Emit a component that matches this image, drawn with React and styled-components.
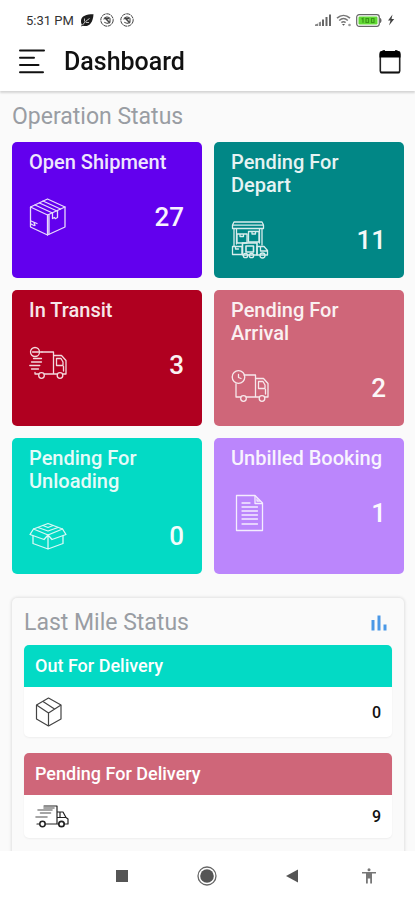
import React from 'react'
import styled, { createGlobalStyle } from 'styled-components'

const GlobalStyle = createGlobalStyle`
    * {
        box-sizing: border-box;
    }

    body {
        margin: 0;
        background: #fff;
        font-family: Roboto, "Liberation Sans", sans-serif;
    }
`

/* ---------- Icons ---------- */

const LeafIcon = () => (
    <svg width="14" height="13" viewBox="0 0 14 13" aria-hidden="true">
        <path d="M13.500 0.300C7 0.200 0.800 1.800 1 7.200c0 1.500.3 2.400.9 3.200L1 12.600l1.800-.9C8.500 13.500 13 9.500 13.500 0.300z" fill="#1c1c1c" />
        <path d="M2.500 11C4.500 8.500 6.500 6.500 9.500 4.500" stroke="#fff" strokeWidth="0.800" fill="none" />
        <path d="M4.500 4.500v3M6 8.500h3" stroke="#fff" strokeWidth="0.700" fill="none" />
    </svg>
)

const SyncIcon = () => (
    <svg width="14" height="14" viewBox="0 0 14 14" fill="none" stroke="#444" aria-hidden="true">
        <circle cx="7" cy="7" r="6.200" strokeDasharray="4 0.600" strokeWidth="1" />
        <path d="M3.800 6.500C4.300 3.800 8.300 3 10 5.500v3C9.500 10.500 6 11 4.300 9" strokeWidth="1.100" />
        <path d="M5 5.500h4M6 6l4 4" strokeWidth="1.500" />
    </svg>
)

const SignalIcon = () => (
    <svg width="17" height="12" viewBox="0 0 17 12" aria-hidden="true">
        <path d="M0 12V10.500L3 9.500V12zM3.800 12V8.500L6 7.500V12z" fill="#888" />
        <path d="M7 5.500h2V12H7zM10.500 3h2v9h-2zM14 0.500h2V12h-2z" fill="#666" />
    </svg>
)

const WifiIcon = () => (
    <svg width="16" height="13" viewBox="0 0 16 13" fill="none" stroke="#777" strokeWidth="1.600" aria-hidden="true">
        <path d="M1 4.200C5 0.500 10 0.500 14 4.200M3.200 6.500c2.600-2.400 6-2.400 8.600 0M5.400 8.700c1.300-1.200 2.900-1.200 4.200 0" />
        <path d="M6 10h3L7.500 11.800z" fill="#555" stroke="none" />
        <circle cx="13.500" cy="11" r="1.300" fill="#999" stroke="none" />
    </svg>
)

const BatteryIcon = () => (
    <svg width="27" height="13" viewBox="0 0 27 13" aria-hidden="true">
        <rect x="0.700" y="0.700" width="22.600" height="11.600" rx="2.500" fill="#fff" stroke="#666" strokeWidth="1.200" />
        <path d="M24 4c2 .5 2 4.500 0 5z" fill="#666" />
        <rect x="2.500" y="2.500" width="19" height="8" rx="1.200" fill="#62d934" />
        <path d="M5.500 5l1.500-.8v4.600M10 4.500h2.500v4H10zM15.500 4.500H18v4h-2.500z" fill="none" stroke="#399717" strokeWidth="1.200" />
    </svg>
)

const BoltIcon = () => (
    <svg width="8" height="12" viewBox="0 0 8 12" aria-hidden="true">
        <path d="M5.500 0.500L1 6.500h2.500L2 11.500 7.200 5H4.500z" fill="#444" />
    </svg>
)

const MenuIcon = () => (
    <svg width="28" height="26" viewBox="0 0 28 26" stroke="#111" strokeWidth="2" strokeLinecap="round" aria-hidden="true">
        <path d="M2 1.500H26M2 8.800H16M2 16H20.500M2 23.200H25" />
    </svg>
)

const CalendarIcon = () => (
    <svg width="22" height="24" viewBox="0 0 22 24" aria-hidden="true">
        <path d="M3.500 0h2.500V3H3.500zM16 0h2.500V3H16z" fill="#333" />
        <rect x="1.300" y="3" width="19.400" height="19.500" rx="1.500" fill="none" stroke="#222" strokeWidth="1.600" />
        <path d="M1.500 22.500h19" stroke="#111" strokeWidth="1.800" />
        <path d="M0.500 3a2 2 0 0 1 2-2h17a2 2 0 0 1 2 2v4.500h-21z" fill="#000" />
    </svg>
)

const ChartIcon = () => (
    <svg width="18" height="16" viewBox="0 0 18 16" fill="#4a98e6" aria-hidden="true">
        <path d="M1.500 5h3v10.500h-3zM7.500 0.500h3v15h-3zM13.500 9.500h3v6h-3z" />
    </svg>
)

// Shared frame of the tile icons
const TileSvg = ({ children }) => (
    <svg
        width="38"
        height="38"
        viewBox="0 0 38 38"
        fill="none"
        stroke="currentColor"
        strokeWidth="1.300"
        strokeLinejoin="round"
        strokeLinecap="round"
        opacity="0.85"
        aria-hidden="true"
    >
        {children}
    </svg>
)

const PackageIcon = () => (
    <TileSvg>
        <path d="M18.500 1L36 9v20L18.500 37 1.500 29V9z" />
        <path d="M1.500 9l17 8L36 9M18.500 17v20M20 17v19" />
        <path d="M6 7l17.500 8M10.500 5L28 13M14 3l17.500 8" />
        <path d="M23.500 15v5.500l2-1 .8 1.200 2.200-1.200V12.500" />
        <path d="M2 23l6 2.500M2 26l3 1.500M5 24.500l1 3" />
    </TileSvg>
)

const WarehouseIcon = () => (
    <TileSvg>
        <path d="M3 1h28l1.500 3v3.500H1.500V4zM1.500 4.200h31M3 7.500V25M5.500 7.500V23M31 7.500V24M28.500 7.500V22" />
        <path d="M6 13h10v9H6zM9 13v2.500h3.500V13M17.500 10.500H28V21H17.500zM21 10.500V13h3.500v-2.500" />
        <path d="M1.500 25.500h9.500v8H1.500zM4.500 25.500v2.500h3" />
        <path d="M11.500 22H26v12H11.500zM15 25h7.500v6H15z" strokeWidth="1.600" />
        <path d="M26 25.500h7l3.500 4V34H26zM29.500 26v4h6.500" />
        <circle cx="14.500" cy="34.500" r="2.200" />
        <circle cx="20.500" cy="34.500" r="2.200" />
        <circle cx="31.500" cy="34.500" r="2.500" />
    </TileSvg>
)

// Body and wheels that both truck tiles have in common
const TruckShape = () => (
    <>
        <path d="M13 6h11.500v19M25 9.500h7.500L37 14.500V28h-3M28 28H24.500V9.500M15.500 28h12.500" />
        <path d="M27.500 12.500h4.500l2 3.500v3.500h-6.500zM34.500 20.500V25" />
        <circle cx="12.500" cy="29.500" r="2.800" />
        <circle cx="31" cy="29.500" r="2.800" />
    </>
)

const TransitIcon = () => (
    <TileSvg>
        <TruckShape />
        <circle cx="6" cy="6" r="4.500" />
        <path d="M3.500 6h9.500M4.500 12.500h8M2.500 16h10M.8 19.500h10M2.500 23h7M6 26.500V28h3.500" />
    </TileSvg>
)

const ArrivalIcon = () => (
    <TileSvg>
        <TruckShape />
        <circle cx="7.500" cy="8" r="6.300" />
        <path d="M7.500 5.500v3l2.500 1M5 28h4.500M5 28V15" />
    </TileSvg>
)

const OpenBoxIcon = () => (
    <TileSvg>
        <path d="M4.500 12L19 6.500 33.500 12 19 18z" />
        <path d="M4.500 12L1 17.500l14 5L19 18l4 4.500 14-5L33.500 12" />
        <path d="M9 10.500l10 3.500 10-3.500M14 8.500L19 10.500l5-2" />
        <path d="M4 19v7.500L19 32l15-5.500V19M19 18v14" />
    </TileSvg>
)

const DocumentIcon = () => (
    <TileSvg>
        <path d="M5.500 1.500H24l7.500 7.500v27.500h-26z" />
        <path d="M24 2v7.500h7M26 5v2h2.500" />
        <path d="M11 9h8M11 13h15.500M11 17h15.500M11 21h15.500M11 25h15.500M11 30h15.500" />
    </TileSvg>
)

const CubeIcon = () => (
    <svg width="28" height="30" viewBox="0 0 28 30" fill="none" stroke="#444" strokeWidth="1.200" strokeLinejoin="round" aria-hidden="true">
        <path d="M13.500 1L26 8v14L13.500 29 1.500 22V8z" />
        <path d="M1.500 8l12 8L26 8M13.500 16v13M8 4.500l11.500 7.500" />
    </svg>
)

const FastTruckIcon = () => (
    <svg width="34" height="23" viewBox="0 0 34 23" fill="none" stroke="#222" strokeWidth="1.200" strokeLinecap="round" strokeLinejoin="round" aria-hidden="true">
        <path d="M9 1h13v18M10 19h12.500M2 19h2.500M22 7h6l3 5.500 2 1.500v5h-2.500M22.500 12.500H31M25 7.500v4.500" />
        <path d="M9 3h10M3 5h14M5.500 8h10M1 12h11" stroke="#888" strokeWidth="1.600" />
        <circle cx="7.500" cy="19" r="2.700" strokeWidth="1.500" />
        <circle cx="26.500" cy="19" r="2.700" strokeWidth="1.700" />
    </svg>
)

const RecentIcon = () => (
    <svg width="14" height="14" viewBox="0 0 14 14" aria-hidden="true">
        <path d="M1 1h12v12H1z" fill="#555" />
    </svg>
)

const HomeIcon = () => (
    <svg width="20" height="20" viewBox="0 0 20 20" aria-hidden="true">
        <circle cx="10" cy="10" r="9" fill="#fff" stroke="#666" strokeWidth="1.300" />
        <circle cx="10" cy="10" r="6.800" fill="#555" />
    </svg>
)

const BackIcon = () => (
    <svg width="14" height="14" viewBox="0 0 14 14" aria-hidden="true">
        <path d="M13 0.500v13L1 7z" fill="#555" />
    </svg>
)

const PersonIcon = () => (
    <svg width="16" height="16" viewBox="0 0 16 16" fill="#777" aria-hidden="true">
        <circle cx="8" cy="1.700" r="1.500" />
        <path d="M1 4h14v1.500h-4V15.500H9.200V10.500H6.800v5H5V5.500H1z" />
    </svg>
)

/* ---------- Data ---------- */

const operations = [
    { title: 'Open Shipment', value: 27, color: '#6200ee', Icon: PackageIcon },
    { title: 'Pending For Depart', value: 11, color: '#018786', Icon: WarehouseIcon },
    { title: 'In Transit', value: 3, color: '#b00020', Icon: TransitIcon },
    { title: 'Pending For Arrival', value: 2, color: '#cf6679', Icon: ArrivalIcon },
    { title: 'Pending For Unloading', value: 0, color: '#03dac5', Icon: OpenBoxIcon },
    { title: 'Unbilled Booking', value: 1, color: '#bb86fc', Icon: DocumentIcon },
]

const deliveries = [
    { title: 'Out For Delivery', value: 0, color: '#03dac5', Icon: CubeIcon },
    { title: 'Pending For Delivery', value: 9, color: '#cf6679', Icon: FastTruckIcon },
]

function App() {
    return (
        <Screen>
            <GlobalStyle />
            <StatusBar>
                <StatusGroup $gap={6}>
                    <span>5:31 PM</span>
                    <LeafIcon />
                    <SyncIcon />
                    <SyncIcon />
                </StatusGroup>
                <StatusGroup $gap={4}>
                    <SignalIcon />
                    <WifiIcon />
                    <BatteryIcon />
                    <BoltIcon />
                </StatusGroup>
            </StatusBar>
            <AppBar>
                <IconButton aria-label="Menu"><MenuIcon /></IconButton>
                <PageTitle>Dashboard</PageTitle>
                <IconButton aria-label="Calendar"><CalendarIcon /></IconButton>
            </AppBar>
            <Content>
                <SectionTitle>Operation Status</SectionTitle>
                <Tiles>
                    {operations.map(({ title, value, color, Icon }) => (
                        <Tile key={title} $color={color}>
                            <TileTitle>{title}</TileTitle>
                            <TileRow>
                                <Icon />
                                <TileValue>{value}</TileValue>
                            </TileRow>
                        </Tile>
                    ))}
                </Tiles>
                <Panel>
                    <PanelHeader>
                        <SectionTitle>Last Mile Status</SectionTitle>
                        <IconButton aria-label="Chart"><ChartIcon /></IconButton>
                    </PanelHeader>
                    {deliveries.map(({ title, value, color, Icon }) => (
                        <Delivery key={title}>
                            <DeliveryTitle $color={color}>{title}</DeliveryTitle>
                            <DeliveryRow>
                                <Icon />
                                <span>{value}</span>
                            </DeliveryRow>
                        </Delivery>
                    ))}
                </Panel>
            </Content>
            <NavBar>
                <IconButton aria-label="Recent apps"><RecentIcon /></IconButton>
                <IconButton aria-label="Home"><HomeIcon /></IconButton>
                <IconButton aria-label="Back"><BackIcon /></IconButton>
                <IconButton aria-label="Accessibility"><PersonIcon /></IconButton>
            </NavBar>
        </Screen>
    )
}

export default App

/* ---------- Styles ---------- */

const Screen = styled.div`
    display: flex;
    flex-direction: column;
    height: 100vh;
    background: #fff;
`

const StatusBar = styled.div`
    display: flex;
    justify-content: space-between;
    padding: 12px 20px 4px 26px;
`

const StatusGroup = styled.div`
    display: flex;
    align-items: center;
    gap: ${({ $gap }) => $gap}px;
    height: 16px;
    color: #333;
    font-size: 13px;
`

const AppBar = styled.header`
    display: flex;
    align-items: center;
    gap: 18px;
    height: 59px;
    padding: 0 14px 0 18px;
    box-shadow: 0 2px 2px rgba(0, 0, 0, 0.15);
    z-index: 1;
`

const IconButton = styled.button`
    display: flex;
    align-items: center;
    justify-content: center;
    padding: 0;
    border: 0;
    background: none;
    cursor: pointer;
`

const PageTitle = styled.h1`
    flex: 1;
    margin: 0;
    color: #111;
    font-size: 25px;
    font-weight: 500;
    line-height: 28px;
`

const Content = styled.main`
    flex: 1;
    min-height: 0;
    padding: 12px 11px 12px 12px;
    background: #fafafa;
    overflow-y: auto;
    scrollbar-width: none;
`

const SectionTitle = styled.h2`
    margin: 0;
    color: #999da3;
    font-size: 23px;
    font-weight: 400;
    line-height: 28px;
`

const Tiles = styled.div`
    display: grid;
    grid-template-columns: 1fr 1fr;
    grid-auto-rows: 136px;
    gap: 12px;
    margin-top: 11px;
`

const Tile = styled.article`
    padding: 9px 18px 9px 17px;
    border-radius: 5px;
    background: ${({ $color }) => $color};
    color: #fff;
`

const TileTitle = styled.h3`
    margin: 0;
    font-size: 20px;
    font-weight: 500;
    line-height: 23px;
    opacity: 0.9;
`

const TileRow = styled.div`
    display: flex;
    align-items: center;
    justify-content: space-between;
    margin-top: 24px;
`

const TileValue = styled.span`
    font-size: 26px;
    font-weight: 500;
    opacity: 0.95;
`

const Panel = styled.section`
    margin-top: 24px;
    padding: 11px 12px;
    border-radius: 5px;
    box-shadow: 0 0 3px 1px rgba(0, 0, 0, 0.1);
`

const PanelHeader = styled.div`
    display: flex;
    align-items: center;
    justify-content: space-between;
    margin-bottom: 8px;
    padding-right: 4px;
`

const Delivery = styled.article`
    margin-bottom: 16px;
    border-radius: 5px;
    background: #fff;
    box-shadow: 0 1px 2px rgba(0, 0, 0, 0.05);
    overflow: hidden;
`

const DeliveryTitle = styled.h3`
    margin: 0;
    padding: 0 11px;
    background: ${({ $color }) => $color};
    color: #fff;
    font-size: 18px;
    font-weight: 500;
    line-height: 42px;
`

const DeliveryRow = styled.div`
    display: flex;
    align-items: center;
    justify-content: space-between;
    padding: 10px 11px;
    color: #111;
    font-size: 16px;
    font-weight: 500;
`

const NavBar = styled.nav`
    display: grid;
    grid-template-columns: 5fr 5fr 5fr 4fr;
    height: 49px;
    padding: 0 12px 0 79px;
    background: #fff;
`
